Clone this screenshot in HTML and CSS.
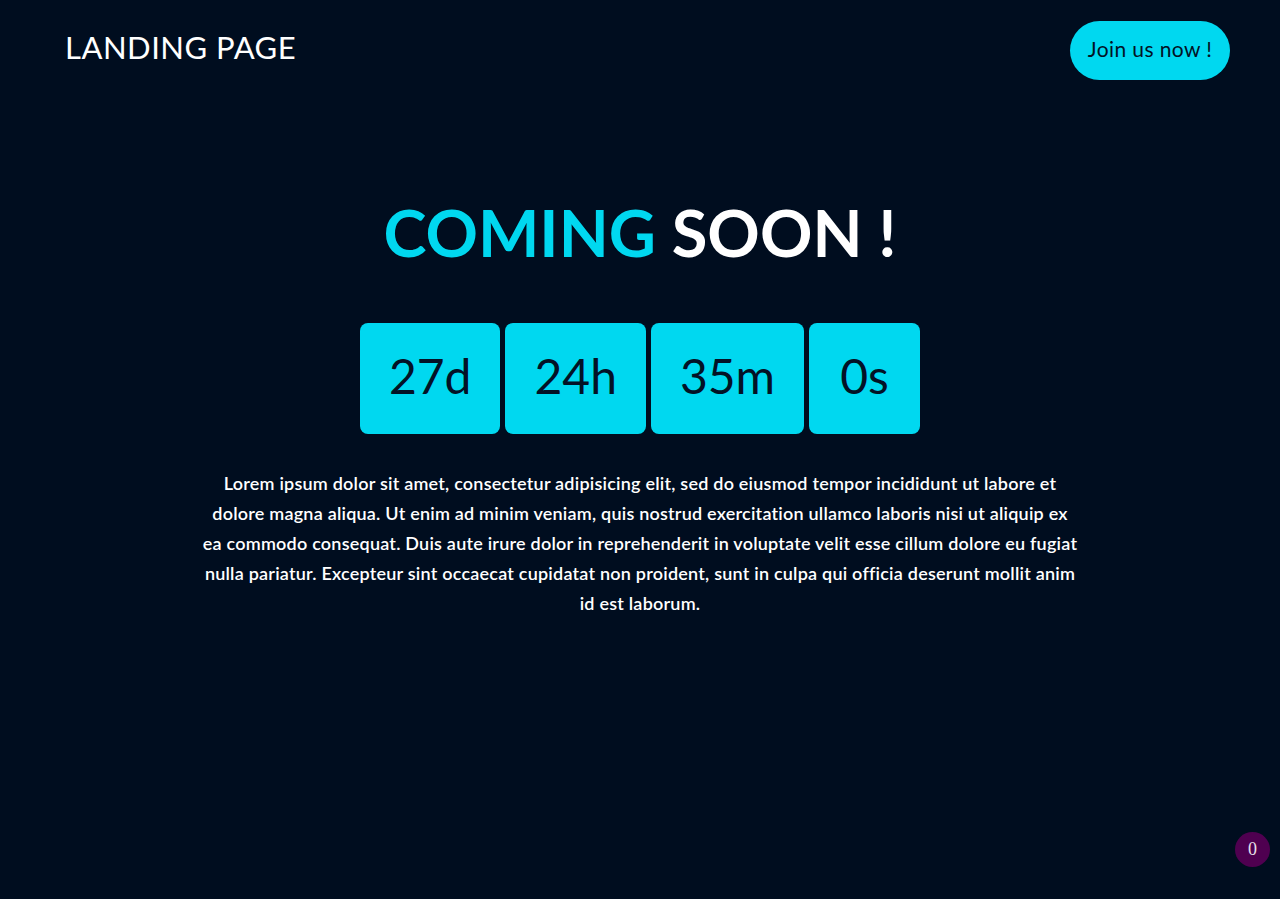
FILE: index.html
```html
<!DOCTYPE html>
<html lang="en">
<head>
<meta charset="utf-8">
<title>Landing Page</title>
<link rel="stylesheet" href="styles.css">
</head>
<body>
<header class="topbar">
  <div class="logo">LANDING PAGE</div>
  <a class="join" href="#">Join us now !</a>
</header>
<main class="hero">
  <h1 class="title"><span class="accent">COMING</span> SOON !</h1>
  <div class="countdown">
    <div class="cell">27d</div>
    <div class="cell">24h</div>
    <div class="cell">35m</div>
    <div class="cell">0s</div>
  </div>
  <p class="text">Lorem ipsum dolor sit amet, consectetur adipisicing elit, sed do eiusmod tempor incididunt ut labore et dolore magna aliqua. Ut enim ad minim veniam, quis nostrud exercitation ullamco laboris nisi ut aliquip ex ea commodo consequat. Duis aute irure dolor in reprehenderit in voluptate velit esse cillum dolore eu fugiat nulla pariatur. Excepteur sint occaecat cupidatat non proident, sunt in culpa qui officia deserunt mollit anim id est laborum.</p>
</main>
<div class="badge">0</div>
</body>
</html>
```

FILE: styles.css
```css
html, body {
  margin: 0;
  padding: 0;
}
body {
  background: #000d1f;
  color: #ffffff;
  font-family: "Lato", "Noto Sans", sans-serif;
  height: 899px;
  overflow: hidden;
}
.topbar {
  display: flex;
  justify-content: space-between;
  align-items: center;
  padding: 21px 50px 0 65px;
}
.logo {
  font-size: 31px;
  font-weight: 400;
  letter-spacing: 0.5px;
  margin-top: -8px;
}
.join {
  display: flex;
  align-items: center;
  justify-content: center;
  box-sizing: border-box;
  width: 160px;
  height: 59px;
  padding-bottom: 5px;
  border-radius: 30px;
  background: #00d8f0;
  color: #031226;
  font-size: 21px;
  text-decoration: none;
  letter-spacing: 0.4px;
}
.hero {
  display: flex;
  flex-direction: column;
  align-items: center;
  padding-top: 112px;
}
.title {
  margin: 0;
  font-size: 65px;
  font-weight: 700;
  letter-spacing: 0;
  line-height: 80px;
}
.accent {
  color: #00d8f0;
}
.countdown {
  display: flex;
  gap: 5px;
  margin-top: 51px;
}
.cell {
  display: flex;
  align-items: center;
  justify-content: center;
  height: 111px;
  padding: 0 29px 6px;
  box-sizing: border-box;
  min-width: 111px;
  background: #00d8f0;
  color: #031226;
  border-radius: 8px;
  font-size: 48px;
}
.text {
  width: 876px;
  margin: 34px 0 0;
  text-align: center;
  font-size: 18px;
  font-weight: 600;
  letter-spacing: 0.22px;
  line-height: 30px;
}
.badge {
  position: fixed;
  right: 10px;
  bottom: 32px;
  width: 35px;
  height: 35px;
  border-radius: 50%;
  background: #4f0050;
  color: #e8e0ea;
  font-family: "Liberation Serif", serif;
  font-size: 18px;
  display: flex;
  align-items: center;
  justify-content: center;
}
```
